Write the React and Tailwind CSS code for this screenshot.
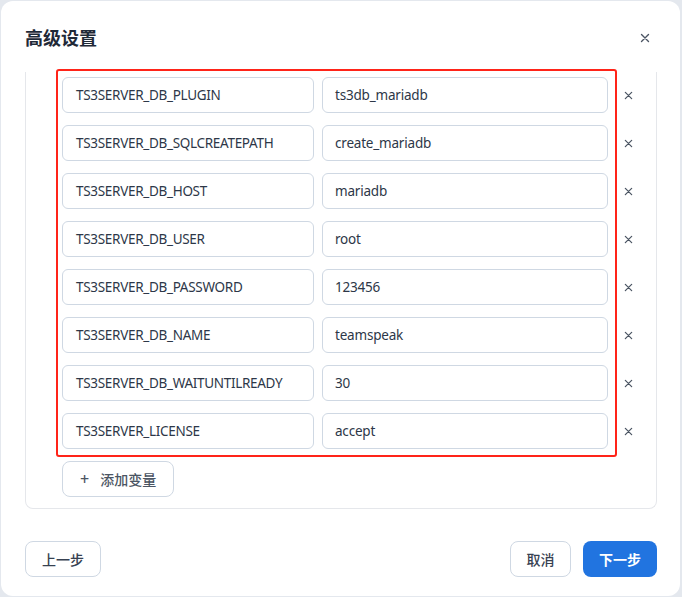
import React from "react";

const rows = [
  ["TS3SERVER_DB_PLUGIN", "ts3db_mariadb"],
  ["TS3SERVER_DB_SQLCREATEPATH", "create_mariadb"],
  ["TS3SERVER_DB_HOST", "mariadb"],
  ["TS3SERVER_DB_USER", "root"],
  ["TS3SERVER_DB_PASSWORD", "123456"],
  ["TS3SERVER_DB_NAME", "teamspeak"],
  ["TS3SERVER_DB_WAITUNTILREADY", "30"],
  ["TS3SERVER_LICENSE", "accept"],
];

function X({ size = 10 }) {
  return (
    <svg width={size} height={size} viewBox="0 0 10 10" fill="none" stroke="#4b5563" strokeWidth="1.4" strokeLinecap="round">
      <path d="M1.5 1.5 L8.5 8.5 M8.5 1.5 L1.5 8.5" />
    </svg>
  );
}

export default function App() {
  return (
    <div
      className="relative h-[597px] w-[682px] bg-[#e4e8ee] pl-px pt-px pr-[2px] pb-px"
      style={{ fontFamily: '"Noto Sans", "Noto Sans CJK SC", sans-serif' }}
    >
      <div className="flex h-full flex-col rounded-xl bg-white">
        <div className="flex h-[71px] items-start justify-between pl-[24px] pr-[30px] pt-[23px]">
          <h2 className="text-[18px] font-bold leading-[28px] text-[#1f2937]">高级设置</h2>
          <button className="mt-[9px]">
            <X size={10} />
          </button>
        </div>
        <div className="pl-[24px] pr-[23px]">
          <div className="rounded-b-lg border-x border-b border-[#e5e7eb] pb-[11px] pl-[36px] pt-[5px]">
            <div className="flex flex-col gap-[12px]">
              {rows.map(([k, v]) => (
                <div key={k} className="flex h-[36px] items-center">
                  <div className="flex h-full w-[252px] items-center rounded-md border border-[#cfd8e3] px-[13px] text-[13.5px] tracking-[-0.3px] text-[#2d3748]">
                    {k}
                  </div>
                  <div className="ml-[8px] flex h-full w-[286px] items-center rounded-md border border-[#cfd8e3] px-[12px] text-[13.5px] tracking-[-0.2px] text-[#2d3748]">
                    {v}
                  </div>
                  <div className="flex w-[40px] items-center justify-center">
                    <X size={9} />
                  </div>
                </div>
              ))}
            </div>
            <button className="mt-[12px] flex h-[36px] w-[112px] items-center rounded-lg border border-[#cfd8e3] pl-[17px] text-[14px] font-medium text-[#4b5563]">
              <span className="mr-[11px] text-[16px] leading-none">+</span>
              添加变量
            </button>
          </div>
        </div>
        <div className="mt-auto flex items-center justify-between pl-[24px] pr-[23px] pb-[19px]">
          <button className="h-[36px] w-[76px] rounded-lg border border-[#cfd8e3] text-[14px] font-medium text-[#374151]">
            上一步
          </button>
          <div className="flex gap-[12px]">
            <button className="h-[36px] w-[61px] rounded-lg border border-[#cfd8e3] text-[14px] font-medium text-[#374151]">
              取消
            </button>
            <button className="h-[36px] w-[74px] rounded-lg bg-[#2174e0] text-[14px] font-bold text-white">
              下一步
            </button>
          </div>
        </div>
      </div>
      <div className="pointer-events-none absolute left-[56px] top-[69px] h-[388px] w-[561px] rounded-[3px] border-2 border-[#ff2419]" />
    </div>
  );
}
